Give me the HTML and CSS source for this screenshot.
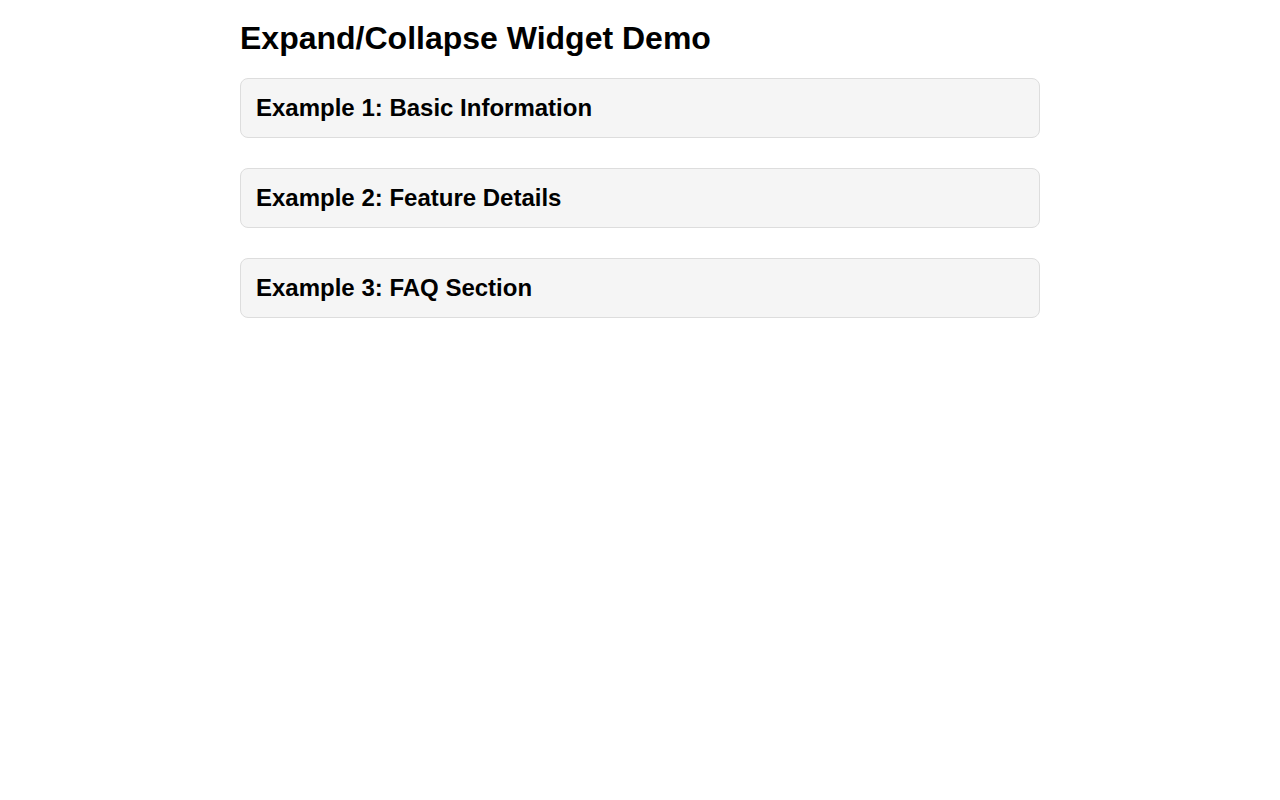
FILE: index.html
```
<!DOCTYPE html>
<html lang="en">
<head>
<meta charset="utf-8">
<title>Expand/Collapse Widget Demo</title>
<link rel="stylesheet" href="styles.css">
</head>
<body>
<main class="page">
  <h1 class="title">Expand/Collapse Widget Demo</h1>
  <section class="panel">
    <h2 class="panel-title">Example 1: Basic Information</h2>
  </section>
  <section class="panel">
    <h2 class="panel-title">Example 2: Feature Details</h2>
  </section>
  <section class="panel">
    <h2 class="panel-title">Example 3: FAQ Section</h2>
  </section>
</main>
</body>
</html>
```
FILE: styles.css
```
html, body {
  margin: 0;
  padding: 0;
  background: #fff;
}
body {
  font-family: "Liberation Sans", Arial, sans-serif;
  color: #000;
}
.page {
  width: 800px;
  margin: 0 auto;
  padding-top: 20px;
}
.title {
  font-size: 32px;
  font-weight: bold;
  margin: 0 0 21px;
  line-height: 37px;
}
.panel {
  background: #f5f5f5;
  border: 1px solid #ddd;
  border-radius: 8px;
  padding: 15px;
  margin-bottom: 30px;
}
.panel-title {
  margin: 0;
  font-size: 24px;
  font-weight: bold;
  line-height: 28px;
}
```
